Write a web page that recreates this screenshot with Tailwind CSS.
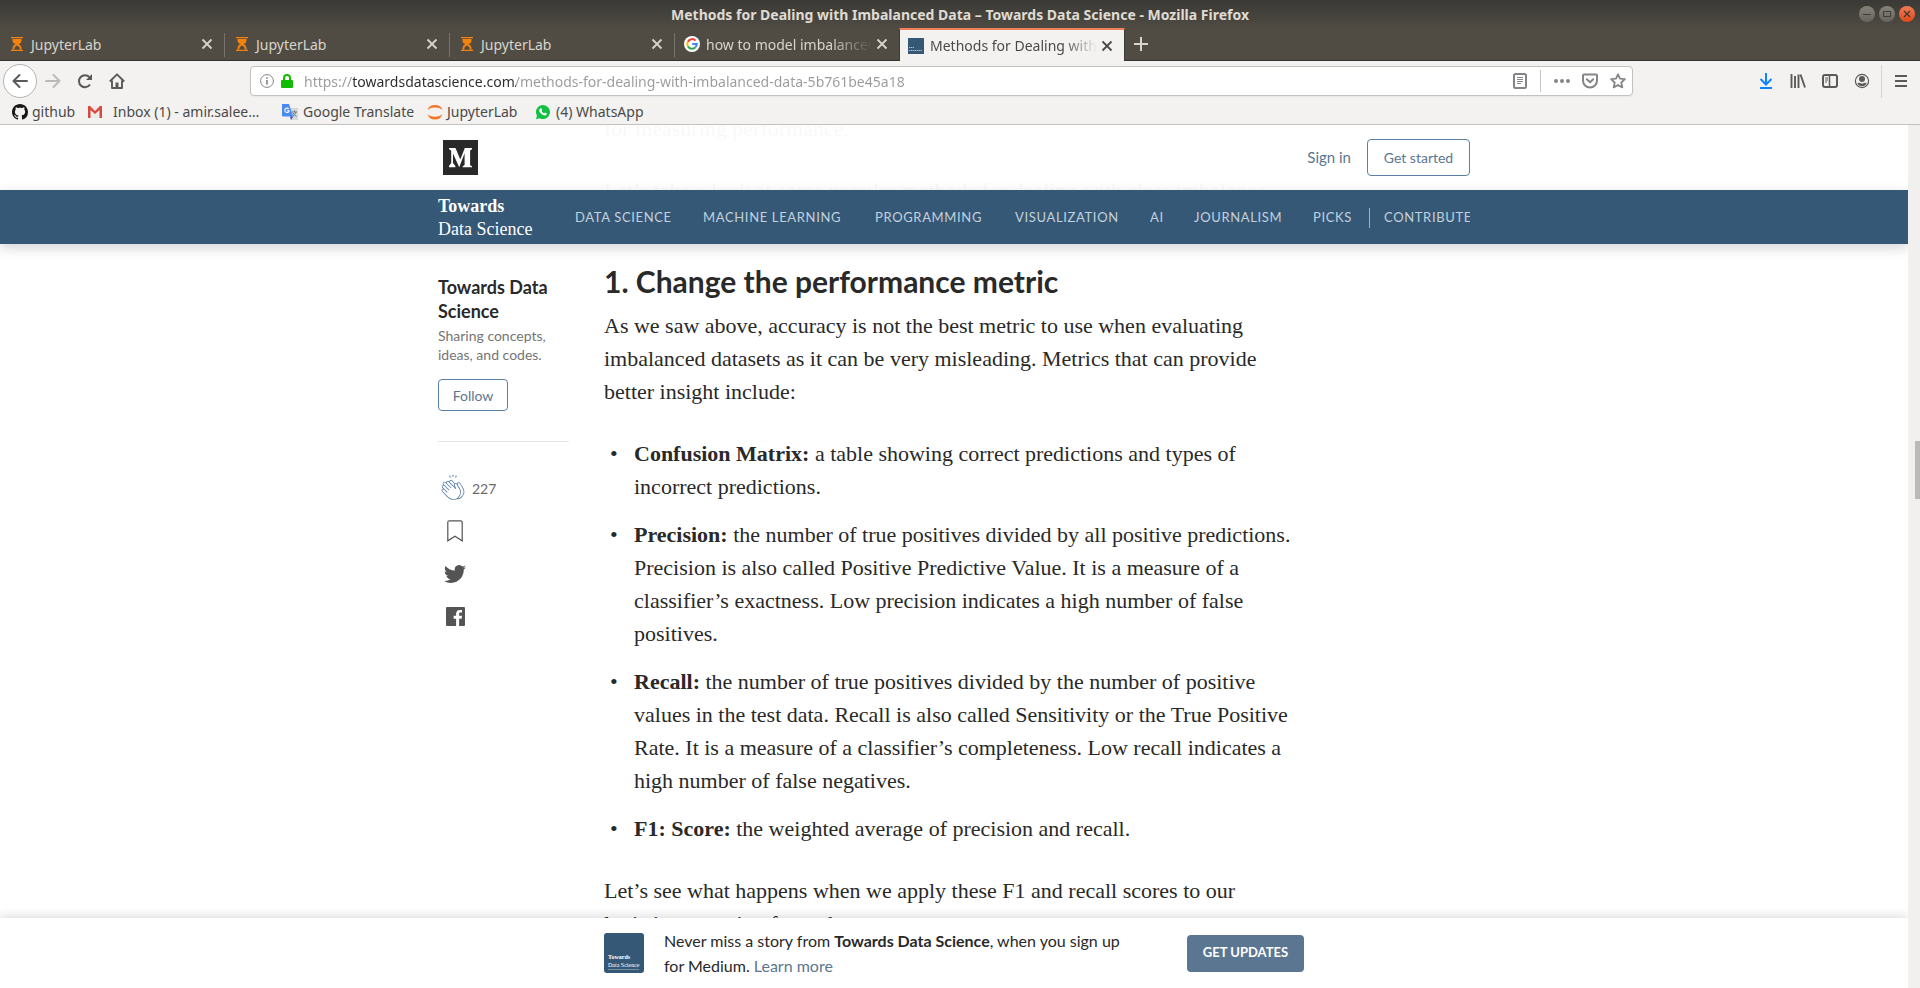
<!DOCTYPE html>
<html lang="en">
<head>
<meta charset="utf-8">
<title>Methods for Dealing with Imbalanced Data – Towards Data Science</title>
<script src="https://cdn.jsdelivr.net/npm/@tailwindcss/browser@4"></script>
</head>
<body class="h-screen flex flex-col overflow-hidden bg-white font-['Noto_Sans',sans-serif] text-[14px] text-[#4a4a48]">
<svg class="hidden">
  <symbol id="hourglass" viewBox="0 0 12 14"><path fill="#f5820b" d="M0 0h12v1.300H0zM0 12.700h12V14H0z"/><path fill="#f5820b" fill-rule="evenodd" d="M1.500 2h9v1.500q0 2.500-3 3.500 3 1 3 5v.7h-9V12q0-4 3-5-3-1-3-3.500zM6 8.500q-2.800 1-3 4.200h6Q8.800 9.500 6 8.500z"/></symbol>
  <symbol id="close" viewBox="0 0 12 12"><path d="M1.500 1.500l9 9m0-9l-9 9" stroke="currentColor" stroke-width="1.800" fill="none"/></symbol>
</svg>

<header class="shrink-0">
  <div class="relative h-7 bg-linear-to-b from-[#3a3935] to-[#4f4b44] flex items-center justify-center">
    <h1 class="font-bold text-[14px] text-[#dfdbd2]">Methods for Dealing with Imbalanced Data – Towards Data Science - Mozilla Firefox</h1>
    <div class="absolute right-[5px] top-[6px] flex gap-1">
      <button aria-label="Minimize" class="size-4 rounded-full bg-linear-to-b from-[#85837b] to-[#65635c] grid place-items-center"><svg class="size-4" viewBox="0 0 16 16"><path d="M4 8.500h8" stroke="#3c3b37"/></svg></button>
      <button aria-label="Maximize" class="size-4 rounded-full bg-linear-to-b from-[#85837b] to-[#65635c] grid place-items-center"><svg class="size-4" viewBox="0 0 16 16"><path d="M4.500 5.500h7v5h-7z" stroke="#3c3b37" fill="none"/></svg></button>
      <button aria-label="Close window" class="size-4 rounded-full bg-linear-to-b from-[#f27a51] to-[#dd4814] grid place-items-center"><svg class="size-4" viewBox="0 0 16 16"><path d="M5 5l6 6m0-6l-6 6" stroke="#3c3b37" stroke-width="1.300"/></svg></button>
    </div>
  </div>

  <nav aria-label="Tabs" class="h-[33px] bg-[#504c44] border-b border-[#33322e] flex text-[#d8d4cb]">
    <div class="w-[225px] flex items-center pl-[11px] pr-3 relative">
      <button class="flex items-center gap-2 flex-1 text-left"><svg class="w-3 h-[14px]"><use href="#hourglass"/></svg>JupyterLab</button>
      <button aria-label="Close tab"><svg class="size-3"><use href="#close"/></svg></button>
      <span class="absolute right-0 top-[5px] h-6 w-px bg-[#77736b]"></span>
    </div>
    <div class="w-[225px] flex items-center pl-[11px] pr-3 relative">
      <button class="flex items-center gap-2 flex-1 text-left"><svg class="w-3 h-[14px]"><use href="#hourglass"/></svg>JupyterLab</button>
      <button aria-label="Close tab"><svg class="size-3"><use href="#close"/></svg></button>
      <span class="absolute right-0 top-[5px] h-6 w-px bg-[#77736b]"></span>
    </div>
    <div class="w-[225px] flex items-center pl-[11px] pr-3 relative">
      <button class="flex items-center gap-2 flex-1 text-left"><svg class="w-3 h-[14px]"><use href="#hourglass"/></svg>JupyterLab</button>
      <button aria-label="Close tab"><svg class="size-3"><use href="#close"/></svg></button>
      <span class="absolute right-0 top-[5px] h-6 w-px bg-[#77736b]"></span>
    </div>
    <div class="w-[224px] flex items-center pl-[9px] pr-[11px] gap-1">
      <button class="flex items-center gap-[6px] flex-1 min-w-0 text-left">
        <svg class="size-4 shrink-0" viewBox="0 0 16 16"><circle cx="8" cy="8" r="8" fill="#fff"/><g fill="none" stroke-width="2"><path d="M11.600 4.700A4.800 4.800 0 0 0 3.800 5.700" stroke="#ea4335"/><path d="M3.800 5.700a4.800 4.800 0 0 0 0 4.600" stroke="#fbbc05"/><path d="M3.800 10.300a4.800 4.800 0 0 0 7.400 1.200" stroke="#34a853"/><path d="M11.200 11.500A4.800 4.800 0 0 0 12.800 8H8.200" stroke="#4285f4"/></g></svg>
        <span class="overflow-hidden whitespace-nowrap flex-1 mask-r-from-75%">how to model imbalanced data</span>
      </button>
      <button aria-label="Close tab"><svg class="size-3"><use href="#close"/></svg></button>
    </div>
    <div class="w-[226px] h-[33px] flex items-center pl-2 pr-[11px] gap-1 bg-[#f4f2f1] text-[#4a4a48] border-t-2 border-t-[#f0805a] border-x border-x-[#3c3b37]">
      <button aria-current="page" class="flex items-center gap-[6px] flex-1 min-w-0 text-left">
        <svg class="size-4 shrink-0" viewBox="0 0 16 16"><path fill="#355876" d="M0 0h16v16H0z"/><path stroke="#a9bac8" stroke-dasharray="1.500 .5" d="M1 9.500h5M1 12.500h13"/></svg>
        <span class="overflow-hidden whitespace-nowrap flex-1 mask-r-from-80%">Methods for Dealing with Imbalanced</span>
      </button>
      <button aria-label="Close tab"><svg class="size-3"><use href="#close"/></svg></button>
    </div>
    <button aria-label="New tab" class="pl-[9px]"><svg class="size-[14px]" viewBox="0 0 14 14"><path d="M7 0v14M0 7h14" stroke="currentColor" stroke-width="2"/></svg></button>
  </nav>

  <div class="h-10 bg-[#f4f2f1] flex items-center pl-[3px] pr-[13px] text-[#5a5a5a]">
    <div class="w-[247px] flex items-center">
      <button aria-label="Back" class="size-[34px] rounded-full bg-white border border-[#b5b3b0] grid place-items-center"><svg class="size-4" viewBox="0 0 16 16" fill="none" stroke="currentColor" stroke-width="2" stroke-linecap="round" stroke-linejoin="round"><path d="M15 8H1.500M7.500 2l-6 6 6 6"/></svg></button>
      <button aria-label="Forward" class="ml-2 text-[#bcbab8]"><svg class="size-4" viewBox="0 0 16 16" fill="none" stroke="currentColor" stroke-width="2" stroke-linecap="round" stroke-linejoin="round"><path d="M1 8h13.500M8.500 2l6 6-6 6"/></svg></button>
      <button aria-label="Reload" class="ml-4"><svg class="size-4" viewBox="0 0 16 16" fill="none" stroke="currentColor" stroke-width="2"><path d="M13 11.500A6 6 0 1 1 12.500 4.200"/><path d="M15 1v6H9z" fill="currentColor" stroke="none"/></svg></button>
      <button aria-label="Home" class="ml-4"><svg class="size-4" viewBox="0 0 16 16" fill="none" stroke="currentColor" stroke-width="1.900" stroke-linejoin="round"><path d="M.8 8.500L8 1.300l7.200 7.200M3 7.500V15h10V7.500"/><path d="M6.500 9.500h3V15h-3z" fill="currentColor" stroke="none"/></svg></button>
    </div>
    <div class="h-[30px] flex-1 max-w-[1383px] bg-white border border-[#c4c2bf] rounded flex items-center pl-[9px] pr-[6px] shadow-xs text-[#858585]">
      <svg class="size-[14px]" viewBox="0 0 14 14" fill="none" stroke="currentColor"><circle cx="7" cy="7" r="6.400"/><path d="M7 6v4.500M7 3.200v1.600" stroke-width="1.700"/></svg>
      <svg class="w-3 h-[14px] ml-[7px]" viewBox="0 0 12 14"><path d="M3 7V4a3 3 0 0 1 6 0v3" fill="none" stroke="#12bc00" stroke-width="2"/><rect y="6" width="12" height="8" rx="1" fill="#12bc00"/></svg>
      <input type="text" aria-label="Address" value="https://towardsdatascience.com/methods-for-dealing-with-imbalanced-data-5b761be45a18" class="flex-1 ml-[11px] outline-none text-transparent bg-clip-text bg-[linear-gradient(90deg,#9a9a9a_48px,#2b2b2b_48px,#2b2b2b_212px,#9a9a9a_212px)]">
      <button aria-label="Reader view"><svg class="w-[14px] h-4" viewBox="0 0 14 16" fill="none" stroke="currentColor"><rect x="1" y="1" width="12" height="14" rx="1.500" stroke-width="2"/><path d="M4 4.500h6M4 6.500h6M4 8.500h6M4 10.500h4"/></svg></button>
      <span class="w-px h-[22px] bg-[#c8c6c3] mx-[13px]"></span>
      <button aria-label="Page actions"><svg class="w-4 h-4" viewBox="0 0 16 16" fill="currentColor"><circle cx="2" cy="8" r="2"/><circle cx="8" cy="8" r="2"/><circle cx="14" cy="8" r="2"/></svg></button>
      <button aria-label="Save to Pocket" class="ml-3"><svg class="size-4" viewBox="0 0 16 16" fill="none" stroke="currentColor" stroke-width="2" stroke-linecap="round" stroke-linejoin="round"><path d="M2 1.500h12a1 1 0 0 1 1 1V7.500a7 7 0 0 1-14 0V2.500a1 1 0 0 1 1-1z"/><path d="M4.800 6.200L8 9.200l3.200-3"/></svg></button>
      <button aria-label="Bookmark this page" class="ml-3"><svg class="size-4" viewBox="0 0 16 16" fill="none" stroke="currentColor" stroke-width="1.800" stroke-linejoin="round"><path d="M8 1.300l2 4.400 4.900.5-3.600 3.300 1 4.900L8 12l-4.300 2.400 1-4.900L1.100 6.200 6 5.700z"/></svg></button>
    </div>
    <div class="ml-auto flex items-center gap-4">
      <button aria-label="Downloads" class="text-[#0a84ff]"><svg class="size-4" viewBox="0 0 16 16" fill="none" stroke="currentColor" stroke-width="2"><path d="M8 0v11M2.500 6L8 11.500 13.500 6M2 15h12"/></svg></button>
      <button aria-label="Library"><svg class="size-4" viewBox="0 0 16 16" fill="none" stroke="currentColor" stroke-width="1.900"><path d="M1.500 1v14M5 3v12M8.500 1.500V15M10.500 1.500l4.500 13"/></svg></button>
      <button aria-label="Sidebar"><svg class="size-4" viewBox="0 0 16 16" fill="none" stroke="currentColor"><rect x="1" y="2" width="14" height="12" rx="2" stroke-width="2"/><path d="M7.500 2v12" stroke-width="1.500"/><path d="M3 5h3M3 7h3M3 9h2"/></svg></button>
      <button aria-label="Account"><svg class="size-4" viewBox="0 0 16 16"><circle cx="8" cy="8" r="6.600" fill="none" stroke="currentColor" stroke-width="1.200"/><circle cx="8" cy="6" r="3" fill="currentColor"/><path d="M3.500 10q1.500-.5 2.500 0 2 1 4 0 1-.5 2.500 0-1 3.300-4.500 3.300T3.500 10z" fill="currentColor"/></svg></button>
      <span class="w-px h-[33px] bg-[#d5d3d0] -ml-[5px] -mr-[3px]"></span>
      <button aria-label="Menu"><svg class="w-3 h-4" viewBox="0 0 12 16" stroke="currentColor" stroke-width="2"><path d="M0 3h12M0 8h12M0 13h12"/></svg></button>
    </div>
  </div>

  <nav aria-label="Bookmarks" class="h-6 bg-[#f4f2f1] border-b border-[#c4c2bf] flex items-center pl-3 pb-[2px] whitespace-nowrap">
    <a href="#" class="flex items-center gap-1 w-[76px]"><svg class="size-4 shrink-0" viewBox="0 0 16 16"><path fill="#191717" d="M8 0C3.580 0 0 3.580 0 8c0 3.540 2.290 6.530 5.470 7.590.4.070.55-.17.55-.38 0-.19-.010-.82-.010-1.490-2.010.37-2.530-.49-2.690-.94-.09-.23-.48-.94-.82-1.130-.28-.15-.68-.52-.010-.53.63-.010 1.080.58 1.230.82.72 1.210 1.870.87 2.330.66.070-.52.28-.87.51-1.070-1.780-.2-3.640-.89-3.640-3.950 0-.87.31-1.590.82-2.150-.08-.2-.36-1.020.08-2.120 0 0 .67-.21 2.200.82.64-.18 1.320-.27 2-.27s1.360.09 2 .27c1.530-1.040 2.200-.82 2.200-.82.44 1.100.16 1.920.08 2.120.51.56.82 1.270.82 2.150 0 3.070-1.870 3.750-3.650 3.950.29.25.54.73.54 1.480 0 1.070-.010 1.930-.010 2.200 0 .21.15.46.55.38A8.010 8.010 0 0 0 16 8c0-4.420-3.580-8-8-8z"/></svg>github</a>
    <a href="#" class="flex items-center gap-[11px] w-[194px]"><svg class="w-[14px] h-3 shrink-0" viewBox="0 0 14 12"><path fill="#eceaea" d="M0 0h14v12H0z"/><path fill="#d54b3d" d="M0 0h2l5 5 5-5h2v12h-2.500V4L7 8 2.500 4v8H0z"/></svg>Inbox (1) - amir.salee…</a>
    <a href="#" class="flex items-center gap-[5px] w-[145px]"><svg class="size-4 shrink-0" viewBox="0 0 16 16"><path fill="#d8d8d8" d="M6 4h10v12H9z"/><path d="M10 8h5m-2.500-1.500V8m1.500 0q-1 3-3.500 4.500M11 9q1 2 3.500 3.500" stroke="#6a7f8d" fill="none"/><path fill="#4a8af4" d="M0 0h7l4.200 12.500H1q-1 0-1-1z"/><path fill="#3a52c4" d="M8 12.500h3.200L9 16z"/><path d="M6.800 5A2.200 2.200 0 1 0 7.200 6.800H5" fill="none" stroke="#fff" stroke-width="1.100"/></svg>Google Translate</a>
    <a href="#" class="flex items-center gap-1 w-[108px]"><svg class="size-4 shrink-0" viewBox="0 0 16 16"><path fill="#f37726" d="M.5 6Q2 1 8 1t7.500 5Q13 3.600 8 3.600T.5 6zM.5 10Q2 15.500 8 15.500t7.500-5.500Q13 12.800 8 12.800T.5 10z"/></svg>JupyterLab</a>
    <a href="#" class="flex items-center gap-[5px]"><svg class="size-4 shrink-0" viewBox="0 0 16 16"><path fill="#12c143" d="M8 1a7 7 0 1 1-3.300 13.200L1 15.200l1-3.600A7 7 0 0 1 8 1z"/><path fill="#fff" d="M5.400 4.300l1 0 .8 1.800-.7 1q1 1.700 2.700 2.400l.8-1 1.900.9q0 2-2 2.100-2 0-4-2T4.300 6q.2-1.300 1.100-1.700z"/></svg>(4) WhatsApp</a>
  </nav>
</header>

<div class="flex-1 min-h-0 flex">
  <div class="flex-1 relative overflow-hidden text-[#292929] font-[Lato,sans-serif]">
    <div class="absolute inset-x-0 top-0 z-10">
      <div class="h-[65px] bg-white/97">
        <div class="max-w-[1032px] mx-auto h-full flex items-center">
          <a href="#" aria-label="Medium" class="ml-[5px]"><svg class="size-[35px]" viewBox="0 0 35 35"><path fill="#292929" d="M0 0h35v35H0z"/><path fill="#fff" d="M6 8h6.500l4.800 11.500L21.800 8H29v1.200l-1.900 1.400v14.600L29 26.300V27.300h-9.300V26.300l1.900-1.300V13.300L16.200 27.300 10 13.500V23l2.400 3v1.200H6V26l2.200-3V10.800L6 9z"/></svg></a>
          <a href="#" class="ml-auto text-[15px] text-[#5b7691]">Sign in</a>
          <button class="ml-4 h-[37px] w-[103px] border border-[#5b80a5] rounded text-[14px] text-[#5b7691]">Get started</button>
        </div>
      </div>
      <div class="h-[54px] bg-[#355876] shadow-[0_4px_12px_rgba(0,0,0,0.17)]">
        <div class="max-w-[1032px] mx-auto h-full pt-[2px] flex items-center overflow-hidden whitespace-nowrap">
          <a href="#" class="w-[137px] shrink-0 text-white font-['Liberation_Serif',serif] text-[18px] leading-[23px]"><b>Towards</b><br>Data Science</a>
          <nav class="shrink-0 flex items-center text-[13px] tracking-wider text-[#c3d0dc]">
            <a href="#" class="w-32">DATA SCIENCE</a>
            <a href="#" class="w-[172px]">MACHINE LEARNING</a>
            <a href="#" class="w-[140px]">PROGRAMMING</a>
            <a href="#" class="w-[135px]">VISUALIZATION</a>
            <a href="#" class="w-11">AI</a>
            <a href="#" class="w-[119px]">JOURNALISM</a>
            <a href="#" class="w-14">PICKS</a>
            <a href="#" class="border-l border-[#9fb2c4] pl-[14px]">CONTRIBUTE</a>
          </nav>
        </div>
      </div>
    </div>

    <div class="max-w-[1032px] mx-auto flex items-start">
      <aside class="w-[131px] mr-[35px] pt-[150px] shrink-0">
        <a href="#" class="block font-bold text-[18px] leading-6">Towards Data Science</a>
        <p class="mt-[3px] text-[14px] leading-[19px] text-[#757575]">Sharing concepts, ideas, and codes.</p>
        <button class="mt-[15px] block w-[70px] h-8 border border-[#5b80a5] rounded text-[14px] text-[#5b7691]">Follow</button>
        <hr class="mt-[30px] border-[#e6e6e6]">
        <button class="mt-[33px] flex items-center gap-[6px] pl-[2px] text-[14px] text-[#6b6b6b]"><svg class="size-[26px]" viewBox="0 0 33 33" fill="#5b80a5"><path d="M28.860 17.342l-3.640-6.402c-.292-.433-.712-.729-1.163-.8a1.124 1.124 0 0 0-.889.213c-.63.488-.742 1.181-.33 2.061l1.222 2.587 1.400 2.460c2.234 4.085 1.511 8.007-2.145 11.663-.26.26-.526.49-.797.707 1.420-.084 2.881-.683 4.292-2.094 3.822-3.823 3.565-7.876 2.050-10.395zm-6.252 11.075c3.352-3.350 3.998-6.775 1.978-10.469l-3.378-5.945c-.292-.432-.712-.728-1.163-.8a1.122 1.122 0 0 0-.89.213c-.63.49-.742 1.182-.33 2.061l1.720 3.638a.502.502 0 0 1-.806.568l-8.910-8.910a1.335 1.335 0 0 0-1.887 1.886l5.292 5.292a.5.5 0 0 1-.707.707l-5.292-5.292-1.492-1.492c-.503-.503-1.382-.505-1.887 0a1.337 1.337 0 0 0 0 1.886l1.493 1.492 5.292 5.292a.499.499 0 0 1-.353.854.5.5 0 0 1-.354-.147L5.642 13.960a1.338 1.338 0 0 0-1.887 0 1.338 1.338 0 0 0 0 1.887l2.230 2.228 3.322 3.324a.499.499 0 0 1-.353.853.502.502 0 0 1-.354-.146l-3.323-3.324a1.333 1.333 0 0 0-1.886 0 1.325 1.325 0 0 0-.39.943c0 .356.138.691.39.943l6.396 6.397c3.528 3.530 8.860 5.313 12.821 1.353zM12.730 9.260l5.680 5.680-.49-1.037c-.518-1.107-.426-2.130.224-2.890l-3.303-3.304a1.337 1.337 0 0 0-1.886 0 1.326 1.326 0 0 0-.39.944c0 .217.067.42.165.607zm14.787 19.184c-1.599 1.600-3.417 2.392-5.353 2.392-.349 0-.7-.030-1.058-.082a7.922 7.922 0 0 1-3.667.887c-3.049 0-6.115-1.626-8.359-3.870l-6.396-6.397A2.315 2.315 0 0 1 2 19.724a2.327 2.327 0 0 1 1.923-2.296l-.875-.875a2.339 2.339 0 0 1 0-3.300 2.330 2.330 0 0 1 1.240-.647l-.139-.139c-.91-.91-.91-2.390 0-3.300.884-.884 2.421-.882 3.301 0l.138.14a2.335 2.335 0 0 1 3.948-1.240l.093.092c.091-.423.291-.828.62-1.157a2.336 2.336 0 0 1 3.300 0l3.384 3.386a2.167 2.167 0 0 1 1.271-.173c.534.086 1.030.354 1.441.765.11-.549.415-1.034.911-1.418a2.120 2.120 0 0 1 1.661-.41c.727.117 1.385.565 1.853 1.262l3.652 6.423c1.704 2.832 2.025 7.377-2.205 11.607zM13.217.484l-1.917.882 2.370 2.837-.454-3.719zm8.487.877l-1.928-.86-.44 3.697 2.368-2.837zM16.500 3.293L15.478-.005h2.044L16.500 3.293z"/></svg>227</button>
        <button aria-label="Bookmark" class="mt-[19px] ml-[9px] block"><svg class="w-4 h-[22px]" viewBox="0 0 16 22" fill="none" stroke="#545454" stroke-width="1.200"><path d="M.8 20.800V2.300Q.8.800 2.300.8h11.400q1.500 0 1.500 1.500v18.500L8 16.300z"/></svg></button>
        <button aria-label="Share on Twitter" class="mt-[21px] ml-[6px] block"><svg class="w-[22px] h-[22px]" viewBox="0 0 24 24" fill="#545454"><path d="M23.950 4.570a10 10 0 0 1-2.820.77 4.960 4.960 0 0 0 2.160-2.720c-.95.550-2 .95-3.130 1.180a4.920 4.920 0 0 0-8.380 4.480C7.690 8.090 4.070 6.130 1.640 3.160a4.820 4.820 0 0 0-.67 2.480c0 1.710.87 3.210 2.190 4.100a4.900 4.900 0 0 1-2.230-.62v.06a4.920 4.920 0 0 0 3.950 4.830 5 5 0 0 1-2.210.08 4.940 4.940 0 0 0 4.600 3.420A9.870 9.870 0 0 1 0 19.540a13.990 13.990 0 0 0 7.550 2.210c9.050 0 14-7.500 14-13.980l-.02-.64a9.940 9.940 0 0 0 2.420-2.560z"/></svg></button>
        <button aria-label="Share on Facebook" class="mt-[22px] ml-2 block"><svg class="size-[19px]" viewBox="0 0 19 19"><path fill="#545454" d="M1 0h17a1 1 0 0 1 1 1v17a1 1 0 0 1-1 1h-4.900v-7.300h2.500l.4-2.900h-2.900V7c0-.9.300-1.400 1.500-1.400H16V3.100c-.3 0-1.200-.1-2.200-.1-2.300 0-3.700 1.300-3.700 3.800v2H7.600v2.900h2.500V19H1a1 1 0 0 1-1-1V1a1 1 0 0 1 1-1z"/></svg></button>
      </aside>

      <article class="-mt-[13px] flex-1 max-w-[700px] font-['Liberation_Serif',serif] text-[22px] leading-[33px] whitespace-nowrap">
        <p>for measuring performance.</p>
        <p class="mt-[29px]">Let’s take a look at some popular methods for dealing with class imbalance.</p>
        <h2 class="mt-[56px] font-[Lato,sans-serif] font-bold text-[30px] leading-9">1. Change the performance metric</h2>
        <p class="mt-[10px]">As we saw above, accuracy is not the best metric to use when evaluating<br>imbalanced datasets as it can be very misleading. Metrics that can provide<br>better insight include:</p>
        <ul class="mt-[29px] pl-[30px] flex flex-col gap-[15px]">
          <li class="flex"><span class="w-6 -ml-6">•</span><p><b>Confusion Matrix:</b> a table showing correct predictions and types of<br>incorrect predictions.</p></li>
          <li class="flex"><span class="w-6 -ml-6">•</span><p><b>Precision:</b> the number of true positives divided by all positive predictions.<br>Precision is also called Positive Predictive Value. It is a measure of a<br>classifier’s exactness. Low precision indicates a high number of false<br>positives.</p></li>
          <li class="flex"><span class="w-6 -ml-6">•</span><p><b>Recall:</b> the number of true positives divided by the number of positive<br>values in the test data. Recall is also called Sensitivity or the True Positive<br>Rate. It is a measure of a classifier’s completeness. Low recall indicates a<br>high number of false negatives.</p></li>
          <li class="flex"><span class="w-6 -ml-6">•</span><p><b>F1: Score:</b> the weighted average of precision and recall.</p></li>
        </ul>
        <p class="mt-[29px]">Let’s see what happens when we apply these F1 and recall scores to our<br>logistic regression from above.</p>
      </article>
    </div>

    <div class="absolute inset-x-0 bottom-0 z-10 h-[70px] bg-white shadow-[0_-2px_10px_rgba(0,0,0,0.14)]">
      <div class="max-w-[700px] mx-auto h-full flex items-center">
        <svg class="size-10 shrink-0" viewBox="0 0 40 40"><rect width="40" height="40" rx="3" fill="#355876"/><g fill="#fff" font-family="Liberation Serif, serif" font-size="6"><text x="4" y="26" font-weight="bold">Towards</text><text x="4" y="34">Data Science</text></g><path d="M4 36.500h31" stroke="#8ea3b6" stroke-width=".7"/></svg>
        <p class="ml-5 flex-1 text-[16px] leading-[25px]">Never miss a story from <b>Towards Data Science</b>, when you sign up<br>for Medium. <a href="#" class="text-[#5b7691]">Learn more</a></p>
        <button class="w-[117px] h-[37px] rounded bg-[#5b7691] text-white font-bold text-[13px]">GET UPDATES</button>
      </div>
    </div>
  </div>
  <div class="w-3 bg-[#f1f0ef] flex justify-end"><div class="w-[5px] h-[58px] mt-[316px] bg-[#bababa]"></div></div>
</div>
</body>
</html>
